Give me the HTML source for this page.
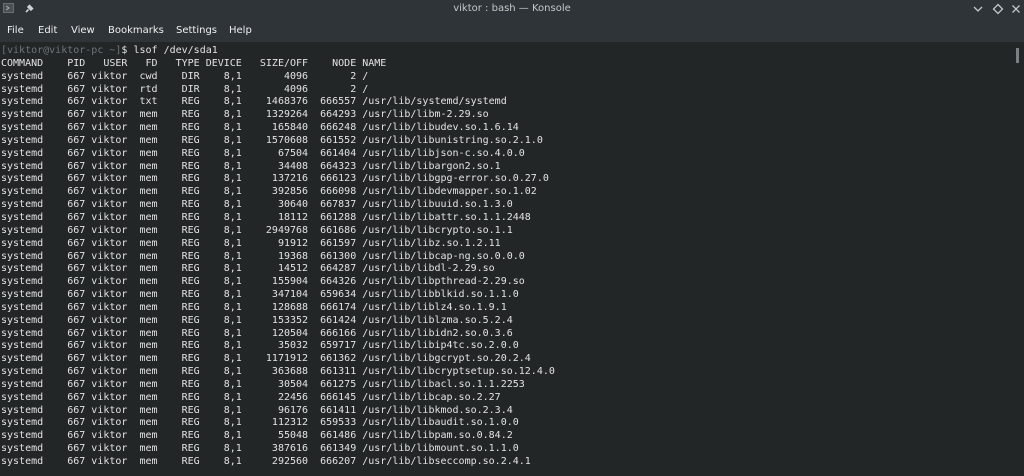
<!DOCTYPE html>
<html><head><meta charset="utf-8">
<style>
html,body{margin:0;padding:0;}
body{width:1024px;height:476px;overflow:hidden;background:#232627;position:relative;font-family:"DejaVu Sans","Liberation Sans",sans-serif;}
#top{position:absolute;left:0;top:0;width:1024px;height:42px;background:#2f3438;}
#title{position:absolute;left:0;width:1024px;top:3px;text-align:center;color:#c6c8c9;font-size:10px;}
#menu{position:absolute;top:25px;left:0;font-size:10px;color:#eff0f1;}
#menu span{position:absolute;white-space:nowrap;}
#term{position:absolute;left:1px;top:45px;margin:0;font-family:"DejaVu Sans Mono","Liberation Mono",monospace;font-size:10px;line-height:12.85px;color:#e2e3e4;white-space:pre;}
.p{color:#6f7477}
#sb{position:absolute;left:1016px;top:48px;width:3px;height:15px;background:#7b7f82;}
</style></head><body>
<div id="top">
<svg style="position:absolute;left:3px;top:3px" width="12" height="12" viewBox="0 0 12 12"><rect x="0.5" y="0.5" width="10" height="9" fill="#4a4f53" stroke="#6a6f72"/><path d="M3 3l3 2-3 2" stroke="#aaa" fill="none"/></svg>
<svg style="position:absolute;left:24px;top:4px" width="10" height="10" viewBox="0 0 10 10"><path d="M2 8l2.5-2.5M4 3l3 3 1.5-1.5-3-3z" stroke="#cfd1d2" stroke-width="1.6" fill="#cfd1d2"/></svg>
<div id="title">viktor : bash — Konsole</div>
<svg style="position:absolute;left:973px;top:5px" width="10" height="8" viewBox="0 0 10 8"><path d="M1 2l4 4 4-4" stroke="#c6c8c9" stroke-width="1.3" fill="none"/></svg>
<svg style="position:absolute;left:992px;top:3px" width="12" height="12" viewBox="0 0 12 12"><path d="M6 1.5l4.5 4.5-4.5 4.5-4.5-4.5z" stroke="#c6c8c9" stroke-width="1.3" fill="none"/></svg>
<svg style="position:absolute;left:1011px;top:4px" width="10" height="10" viewBox="0 0 10 10"><path d="M1.5 1.5l7 7M8.5 1.5l-7 7" stroke="#c6c8c9" stroke-width="1.3"/></svg>
<div id="menu">
<span style="left:7px">File</span><span style="left:38px">Edit</span><span style="left:71px">View</span><span style="left:108px">Bookmarks</span><span style="left:176px">Settings</span><span style="left:229px">Help</span>
</div>
</div>
<div id="sb"></div>
<pre id="term"><span class="p">[viktor@viktor-pc ~]</span>$ lsof /dev/sda1
COMMAND    PID   USER   FD   TYPE DEVICE   SIZE/OFF    NODE NAME
systemd    667 viktor  cwd    DIR    8,1       4096       2 /
systemd    667 viktor  rtd    DIR    8,1       4096       2 /
systemd    667 viktor  txt    REG    8,1    1468376  666557 /usr/lib/systemd/systemd
systemd    667 viktor  mem    REG    8,1    1329264  664293 /usr/lib/libm-2.29.so
systemd    667 viktor  mem    REG    8,1     165840  666248 /usr/lib/libudev.so.1.6.14
systemd    667 viktor  mem    REG    8,1    1570608  661552 /usr/lib/libunistring.so.2.1.0
systemd    667 viktor  mem    REG    8,1      67504  661404 /usr/lib/libjson-c.so.4.0.0
systemd    667 viktor  mem    REG    8,1      34408  664323 /usr/lib/libargon2.so.1
systemd    667 viktor  mem    REG    8,1     137216  666123 /usr/lib/libgpg-error.so.0.27.0
systemd    667 viktor  mem    REG    8,1     392856  666098 /usr/lib/libdevmapper.so.1.02
systemd    667 viktor  mem    REG    8,1      30640  667837 /usr/lib/libuuid.so.1.3.0
systemd    667 viktor  mem    REG    8,1      18112  661288 /usr/lib/libattr.so.1.1.2448
systemd    667 viktor  mem    REG    8,1    2949768  661686 /usr/lib/libcrypto.so.1.1
systemd    667 viktor  mem    REG    8,1      91912  661597 /usr/lib/libz.so.1.2.11
systemd    667 viktor  mem    REG    8,1      19368  661300 /usr/lib/libcap-ng.so.0.0.0
systemd    667 viktor  mem    REG    8,1      14512  664287 /usr/lib/libdl-2.29.so
systemd    667 viktor  mem    REG    8,1     155904  664326 /usr/lib/libpthread-2.29.so
systemd    667 viktor  mem    REG    8,1     347104  659634 /usr/lib/libblkid.so.1.1.0
systemd    667 viktor  mem    REG    8,1     128688  666174 /usr/lib/liblz4.so.1.9.1
systemd    667 viktor  mem    REG    8,1     153352  661424 /usr/lib/liblzma.so.5.2.4
systemd    667 viktor  mem    REG    8,1     120504  666166 /usr/lib/libidn2.so.0.3.6
systemd    667 viktor  mem    REG    8,1      35032  659717 /usr/lib/libip4tc.so.2.0.0
systemd    667 viktor  mem    REG    8,1    1171912  661362 /usr/lib/libgcrypt.so.20.2.4
systemd    667 viktor  mem    REG    8,1     363688  661311 /usr/lib/libcryptsetup.so.12.4.0
systemd    667 viktor  mem    REG    8,1      30504  661275 /usr/lib/libacl.so.1.1.2253
systemd    667 viktor  mem    REG    8,1      22456  666145 /usr/lib/libcap.so.2.27
systemd    667 viktor  mem    REG    8,1      96176  661411 /usr/lib/libkmod.so.2.3.4
systemd    667 viktor  mem    REG    8,1     112312  659533 /usr/lib/libaudit.so.1.0.0
systemd    667 viktor  mem    REG    8,1      55048  661486 /usr/lib/libpam.so.0.84.2
systemd    667 viktor  mem    REG    8,1     387616  661349 /usr/lib/libmount.so.1.1.0
systemd    667 viktor  mem    REG    8,1     292560  666207 /usr/lib/libseccomp.so.2.4.1</pre>
</body></html>
